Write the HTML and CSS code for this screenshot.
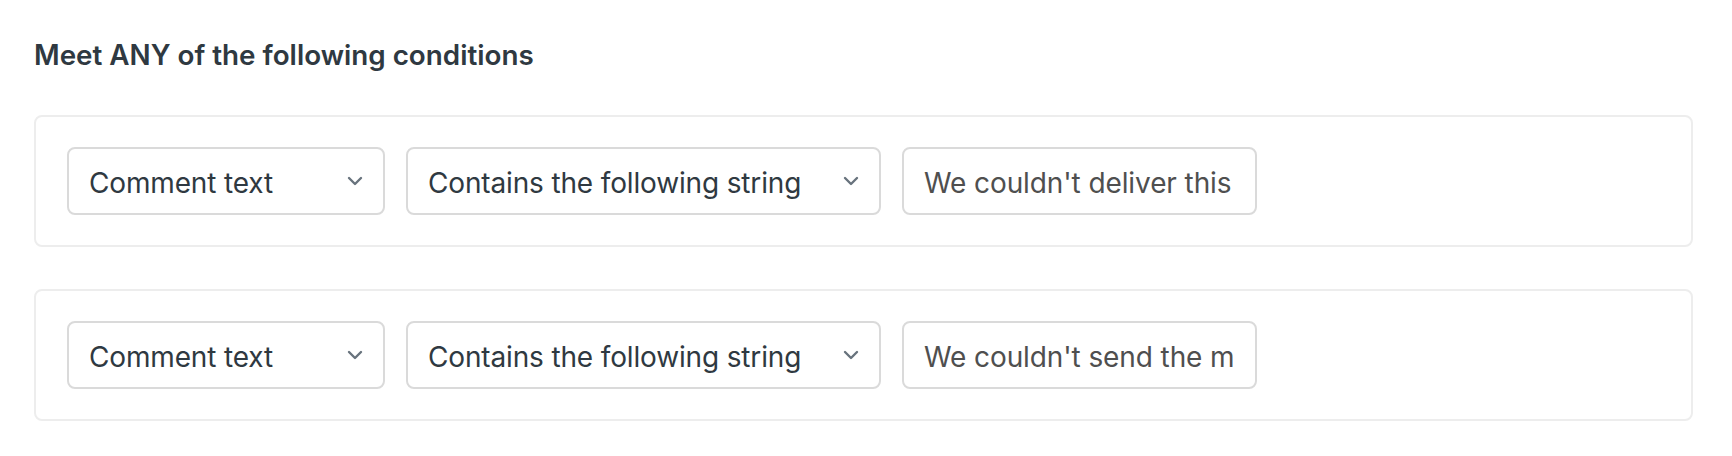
FILE: index.html
```html
<!DOCTYPE html>
<html lang="en">
<head>
<meta charset="utf-8">
<title>Conditions</title>
<link rel="stylesheet" href="styles.css">
</head>
<body>
<div class="page">
  <h2 class="title">Meet ANY of the following conditions</h2>
  <div class="card">
    <div class="select field-w1">
      <span class="select-label">Comment text</span>
      <svg class="chev" width="16" height="10" viewBox="0 0 16 10"><path d="M2 2 L8 8 L14 2" fill="none" stroke="#68737d" stroke-width="2.4" stroke-linecap="round" stroke-linejoin="round"/></svg>
    </div>
    <div class="select field-w2">
      <span class="select-label">Contains the following string</span>
      <svg class="chev" width="16" height="10" viewBox="0 0 16 10"><path d="M2 2 L8 8 L14 2" fill="none" stroke="#68737d" stroke-width="2.4" stroke-linecap="round" stroke-linejoin="round"/></svg>
    </div>
    <input class="text-input" type="text" value="We couldn't deliver this message">
  </div>
  <div class="card">
    <div class="select field-w1">
      <span class="select-label">Comment text</span>
      <svg class="chev" width="16" height="10" viewBox="0 0 16 10"><path d="M2 2 L8 8 L14 2" fill="none" stroke="#68737d" stroke-width="2.4" stroke-linecap="round" stroke-linejoin="round"/></svg>
    </div>
    <div class="select field-w2">
      <span class="select-label">Contains the following string</span>
      <svg class="chev" width="16" height="10" viewBox="0 0 16 10"><path d="M2 2 L8 8 L14 2" fill="none" stroke="#68737d" stroke-width="2.4" stroke-linecap="round" stroke-linejoin="round"/></svg>
    </div>
    <input class="text-input" type="text" value="We couldn't send the message">
  </div>
</div>
</body>
</html>
```

FILE: styles.css
```css
html, body {
  margin: 0;
  padding: 0;
  background: #ffffff;
}

.page {
  padding: 37px 39px 0 34px;
  font-family: Inter, "Noto Sans", "Liberation Sans", sans-serif;
  color: #2f3941;
}

.title {
  margin: 0 0 42px 0;
  font-size: 27.8px;
  line-height: 36px;
  font-weight: 600;
  color: #2f3941;
}

.card {
  display: flex;
  align-items: center;
  gap: 21px;
  border: 2px solid #ededed;
  border-radius: 8px;
  padding: 30px 31px;
  margin-bottom: 42px;
}

.select {
  box-sizing: border-box;
  height: 68px;
  display: flex;
  align-items: center;
  justify-content: space-between;
  border: 2px solid #dadada;
  border-radius: 8px;
  padding: 0 20px 0 20px;
  font-size: 28px;
  letter-spacing: -0.15px;
  color: #2f3941;
  background: #fff;
}

.field-w1 { width: 318px; }
.field-w2 { width: 475px; }

.select-label {
  white-space: nowrap;
  padding-top: 3px;
}

.chev {
  display: block;
  flex: none;
}

.text-input {
  box-sizing: border-box;
  width: 355px;
  height: 68px;
  border: 2px solid #dadada;
  border-radius: 8px;
  padding: 3px 20px 0 20px;
  font-family: Inter, "Noto Sans", "Liberation Sans", sans-serif;
  font-size: 28px;
  letter-spacing: -0.1px;
  color: #4f4f4f;
  background: #fff;
  outline: none;
  margin: 0;
}
```
